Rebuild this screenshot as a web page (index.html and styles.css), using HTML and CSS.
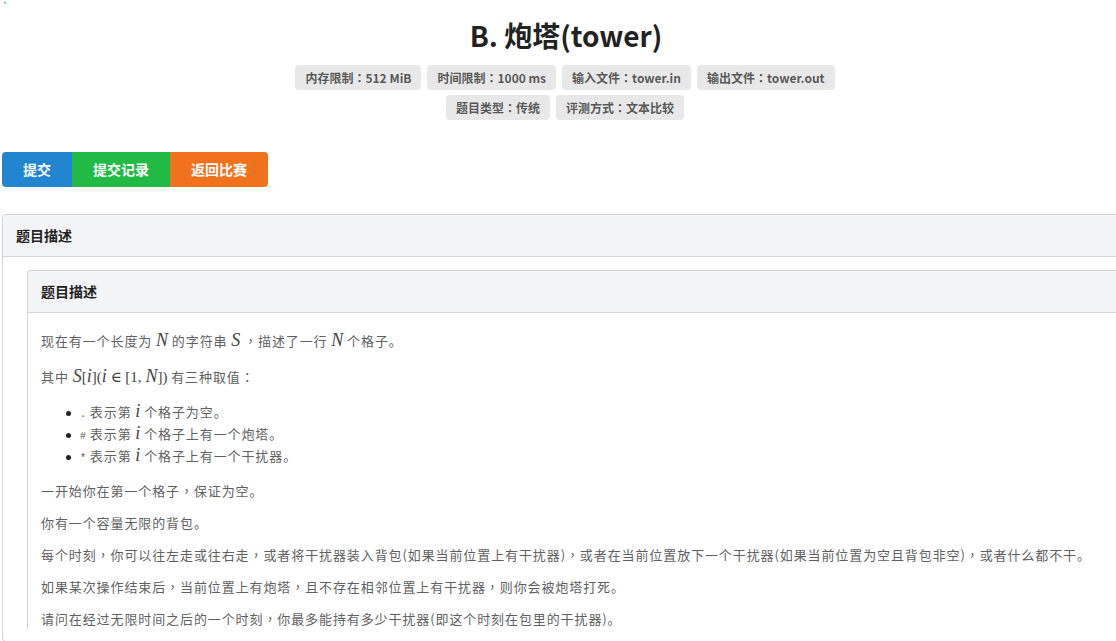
FILE: index.html
```html
<!DOCTYPE html>
<html lang="zh">
<head>
    <meta charset="UTF-8">
    <title>B. 炮塔(tower)</title>
    <link rel="stylesheet" href="styles.css">
</head>
<body>
    <div class="tick">`</div>
    <h1 class="title">B. 炮塔(tower)</h1>
    <div class="labels">
        <span class="label">内存限制<span class="p" lang="zh-Hant">：</span>512 MiB</span>
        <span class="label">时间限制<span class="p" lang="zh-Hant">：</span>1000 ms</span>
        <span class="label">输入文件<span class="p" lang="zh-Hant">：</span>tower.in</span>
        <span class="label">输出文件<span class="p" lang="zh-Hant">：</span>tower.out</span>
    </div>
    <div class="labels">
        <span class="label">题目类型<span class="p" lang="zh-Hant">：</span>传统</span>
        <span class="label">评测方式<span class="p" lang="zh-Hant">：</span>文本比较</span>
    </div>
    <div class="buttons">
        <a class="btn blue" href="#">提交</a>
        <a class="btn green" href="#">提交记录</a>
        <a class="btn orange" href="#">返回比赛</a>
    </div>
    <div class="segment outer">
        <div class="seg-header">题目描述</div>
        <div class="seg-body">
            <div class="segment inner">
                <div class="seg-header">题目描述</div>
                <div class="content">
                    <p class="mline">现在有一个长度为 <span class="m">N</span> 的字符串 <span class="m">S</span> <span class="p" lang="zh-Hant">，</span>描述了一行 <span class="m">N</span> 个格子。</p>
                    <p class="mline">其中 <span class="m">S</span><span class="mr">[</span><span class="m">i</span><span class="mr">](</span><span class="m">i</span> <span class="mr">∈ [1,</span> <span class="m">N</span><span class="mr">])</span> 有三种取值<span class="p" lang="zh-Hant">：</span></p>
                    <ul>
                        <li><code>.</code> 表示第 <span class="m">i</span> 个格子为空。</li>
                        <li><code>#</code> 表示第 <span class="m">i</span> 个格子上有一个炮塔。</li>
                        <li><code>*</code> 表示第 <span class="m">i</span> 个格子上有一个干扰器。</li>
                    </ul>
                    <p>一开始你在第一个格子<span class="p" lang="zh-Hant">，</span>保证为空。</p>
                    <p>你有一个容量无限的背包。</p>
                    <p>每个时刻<span class="p" lang="zh-Hant">，</span>你可以往左走或往右走<span class="p" lang="zh-Hant">，</span>或者将干扰器装入背包(如果当前位置上有干扰器)<span class="p" lang="zh-Hant">，</span>或者在当前位置放下一个干扰器(如果当前位置为空且背包非空)<span class="p" lang="zh-Hant">，</span>或者什么都不干。</p>
                    <p>如果某次操作结束后<span class="p" lang="zh-Hant">，</span>当前位置上有炮塔<span class="p" lang="zh-Hant">，</span>且不存在相邻位置上有干扰器<span class="p" lang="zh-Hant">，</span>则你会被炮塔打死。</p>
                    <p>请问在经过无限时间之后的一个时刻<span class="p" lang="zh-Hant">，</span>你最多能持有多少干扰器(即这个时刻在包里的干扰器)。</p>
                </div>
            </div>
        </div>
    </div>
</body>
</html>
```

FILE: styles.css
```css
body { margin: 0; padding: 0 0 0 2px; font-family: "Noto Sans CJK SC", "Open Sans", sans-serif; color: #333; background: #fff; width: 1160px; overflow: hidden; }
.tick { font-size: 11px; line-height: 12px; height: 12px; color: #2185d0; }
.title { margin: 3px 0 10px; text-align: center; font-size: 28px; line-height: 40px; font-weight: 700; color: #222; width: 1128px; }
.labels { display: flex; justify-content: center; gap: 6px; margin-bottom: 5px; width: 1126px; }
.label { display: inline-block; background: #e8e8e8; color: rgba(0,0,0,.65); font-size: 12px; font-weight: 700; line-height: 25px; height: 25px; padding: 0 10px; border-radius: 4px; }
.p { font-family: "Noto Sans CJK TC", "Noto Sans CJK SC", sans-serif; }
.buttons { display: flex; margin-top: 32px; }
.btn { display: block; height: 35px; line-height: 35px; padding: 0 21px; color: #fff; font-size: 14px; font-weight: 700; text-decoration: none; }
.blue { background: #2185d0; border-radius: 4px 0 0 4px; }
.green { background: #21ba45; }
.orange { background: #f2711c; border-radius: 0 4px 4px 0; }
.segment { border: 1px solid #d4d4d5; border-radius: 4px; background: #fff; }
.outer { margin-top: 27px; width: 1150px; }
.seg-header { background: #f3f4f5; border-bottom: 1px solid #d4d4d5; height: 41px; line-height: 41px; padding: 0 13px; font-size: 14px; font-weight: 700; color: #222; border-radius: 4px 4px 0 0; }
.seg-body { padding: 13px 0 0 24px; }
.inner { border-right: none; border-bottom: none; border-radius: 4px 0 0 0; }
.content { padding: 16px 13px 0; font-size: 13px; color: #5f5f5f; letter-spacing: 0.9px; }
.content p { margin: 0 0 12px; line-height: 20px; }
.content p.mline { line-height: 24px; height: 24px; }
.m { font-family: "Liberation Serif", "DejaVu Serif", serif; font-style: italic; font-size: 18px; line-height: 1; color: #444; letter-spacing: 0; }
.mr { font-family: "Liberation Serif", "DejaVu Serif", serif; font-size: 15px; line-height: 1; color: #444; letter-spacing: 0; }
.content ul { margin: 0 0 14px; padding-left: 25px; list-style: none; }
.content li { line-height: 22px; height: 22px; }
.content li::before { content: ""; display: inline-block; width: 5px; height: 5px; border-radius: 50%; background: #222; margin-right: 9px; vertical-align: middle; }
code { font-family: "Liberation Mono", monospace; font-size: 10px; color: #555; letter-spacing: 0; }
```
